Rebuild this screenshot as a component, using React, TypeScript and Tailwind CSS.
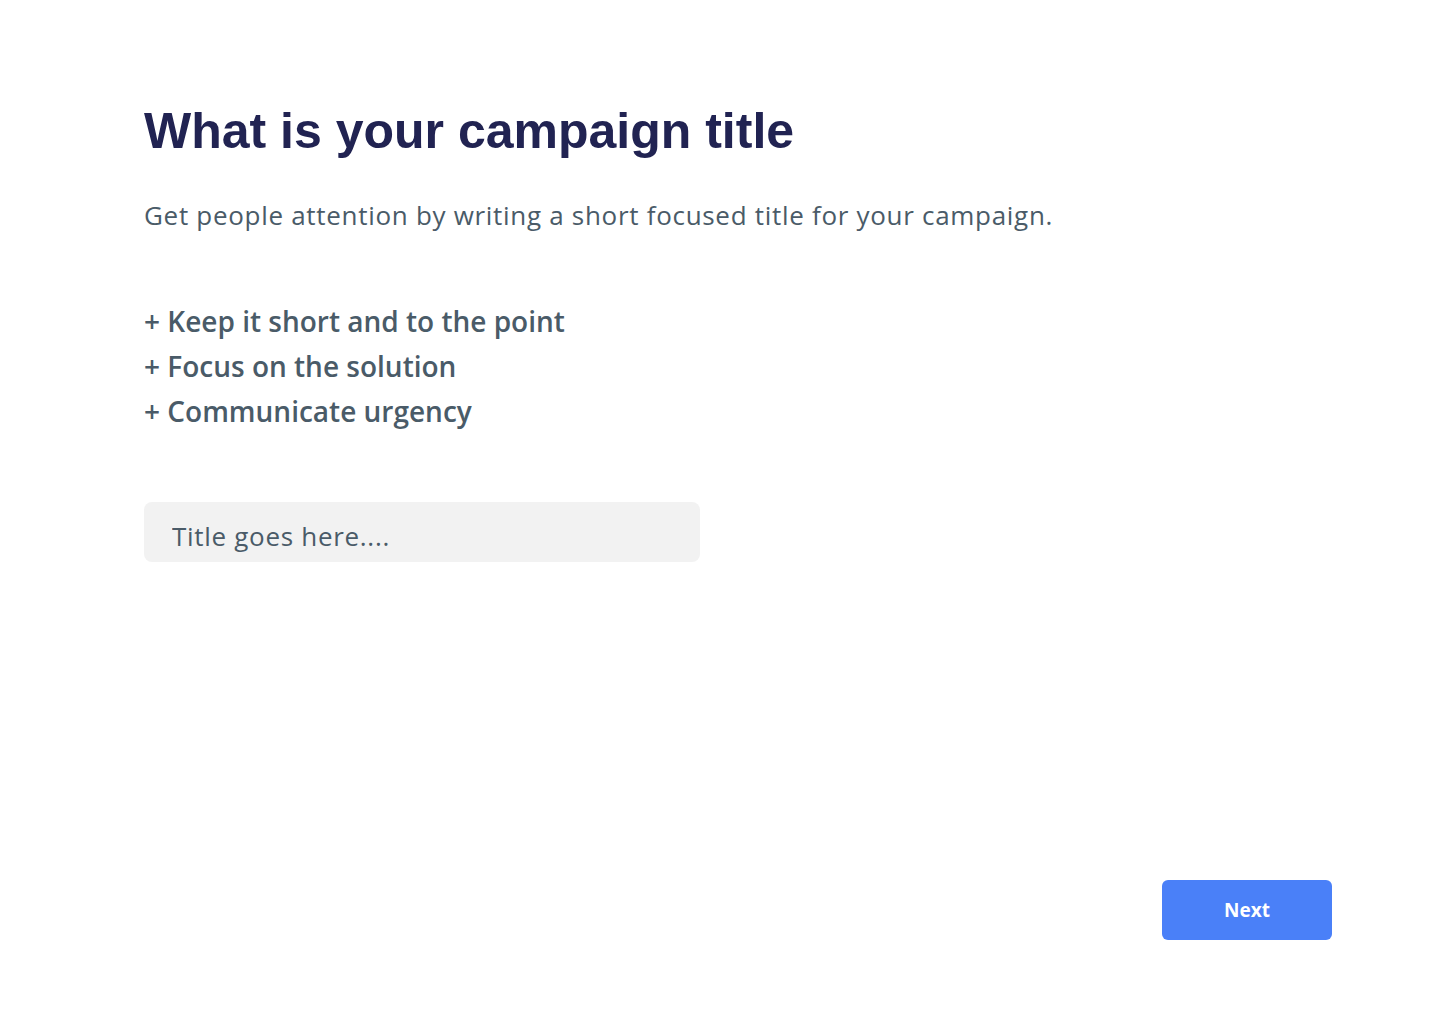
import React, { useState } from "react";

// Tips shown under the subtitle
const TIPS: Array<string> = [
  "Keep it short and to the point",
  "Focus on the solution",
  "Communicate urgency",
];

export default function App() {
  const [title, setTitle] = useState("");

  return (
    <div className="w-[1440px] h-[1024px] bg-white flex flex-col pl-[144px] pr-[108px] pt-[100px] pb-[84px] font-['Open_Sans','Noto_Sans',sans-serif] text-[#4a5b68]">
      <h1 className="font-['Liberation_Sans',Arial,sans-serif] font-bold text-[50px] leading-[62px] text-[#212352]">
        What is your campaign title
      </h1>
      <p className="mt-[36px] text-[26px] leading-[34px] tracking-[0.7px]">
        Get people attention by writing a short focused title for your campaign.
      </p>

      <ul className="mt-[67px] flex flex-col">
        {TIPS.map((tip, idx) => (
          <li key={idx} className="text-[28px] leading-[45px] font-semibold">
            + {tip}
          </li>
        ))}
      </ul>

      <input
        value={title}
        onChange={(e) => setTitle(e.target.value)}
        placeholder="Title goes here...."
        className="mt-[68px] w-[556px] h-[60px] rounded-[8px] bg-[#f2f2f2] px-[28px] pt-[7px] text-[26px] tracking-[0.7px] outline-none placeholder:text-[#4a5b68]"
      />

      <div className="mt-auto flex justify-end">
        <button className="w-[170px] h-[60px] rounded-[6px] bg-[#4a80f8] text-white text-[19px] font-bold">
          Next
        </button>
      </div>
    </div>
  );
}
